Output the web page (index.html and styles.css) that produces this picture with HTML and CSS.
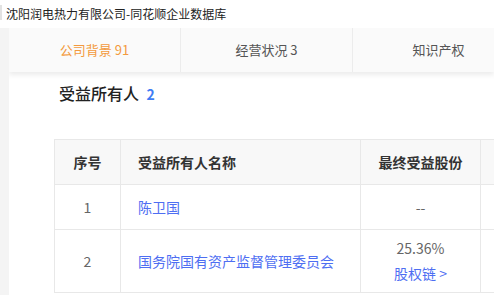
FILE: index.html
```html
<!DOCTYPE html>
<html>
  <head>
    <title>沈阳润电热力有限公司-同花顺企业数据库</title>
    <meta charset="UTF-8" />
    <link rel="stylesheet" href="styles.css">
  </head>
  <body>
    <div class="titlebar"><span class="favicon"></span>沈阳润电热力有限公司-同花顺企业数据库</div>

    <div class="page">
      <div class="tabs">
        <div class="tab active">公司背景 91</div>
        <div class="tab">经营状况 3</div>
        <div class="tab">知识产权</div>
      </div>

      <div class="section">
        <h2>受益所有人 <span class="count">2</span></h2>

        <table class="owners">
          <tr>
            <th class="col-no">序号</th>
            <th class="col-name name">受益所有人名称</th>
            <th class="col-share">最终受益股份</th>
            <th class="col-more"></th>
          </tr>
          <tr class="row-short">
            <td class="num">1</td>
            <td class="name"><a href="#">陈卫国</a></td>
            <td class="share">--</td>
            <td></td>
          </tr>
          <tr class="row-tall">
            <td class="num">2</td>
            <td class="name"><a href="#">国务院国有资产监督管理委员会</a></td>
            <td class="share">25.36%<br><a href="#">股权链 &gt;</a></td>
            <td></td>
          </tr>
        </table>
      </div>
    </div>
  </body>
</html>
```

FILE: styles.css
```css
body {
  margin: 0;
  background-color: #f4f4f4;
  font-family: "Noto Sans CJK SC", "Liberation Sans", sans-serif;
  overflow: hidden;
}
.titlebar {
  height: 28px;
  line-height: 28px;
  background: white;
  font-size: 12px;
  color: #222;
  padding-left: 6px;
  position: relative;
}
.favicon {
  position: absolute;
  left: 0;
  top: 5px;
  width: 2px;
  height: 15px;
  background: #e2e2e2;
}
.page {
  margin-left: 9px;
  background: white;
  height: 267px;
  overflow: hidden;
}
.tabs {
  display: flex;
  height: 44px;
  background: #fafafa;
  box-shadow: 0 3px 5px rgba(0,0,0,0.08);
  position: relative;
}
.tab {
  flex: 0 0 171px;
  border-right: 1px solid #ececec;
  text-align: center;
  line-height: 44px;
  font-size: 13px;
  color: #555;
}
.tab.active {
  color: #f39a3e;
}
.section {
  padding-left: 45px;
}
h2 {
  margin: 9px 0 0 5px;
  font-size: 16px;
  line-height: 24px;
  font-weight: 500;
  color: #222;
}
.count {
  color: #3f7cf4;
  font-size: 14px;
  font-weight: bold;
  margin-left: 4px;
}
.owners {
  margin-top: 33px;
  border-collapse: collapse;
  font-size: 14px;
  width: 600px;
  table-layout: fixed;
}
.owners th, .owners td {
  border: 1px solid #e8e8e8;
  text-align: center;
  padding: 0;
}
.owners th {
  background: #f8f8f8;
  height: 44px;
  color: #333;
  font-weight: bold;
}
.col-no { width: 65px; }
.col-name { width: 222px; }
.col-share { width: 119px; }
.owners td {
  color: #666;
}
.owners .name {
  text-align: left;
  padding-left: 17px;
}
.owners a {
  color: #4e6ef2;
  text-decoration: none;
}
.row-short td { height: 44px; }
.row-tall td { height: 62px; line-height: 25px; }
```
